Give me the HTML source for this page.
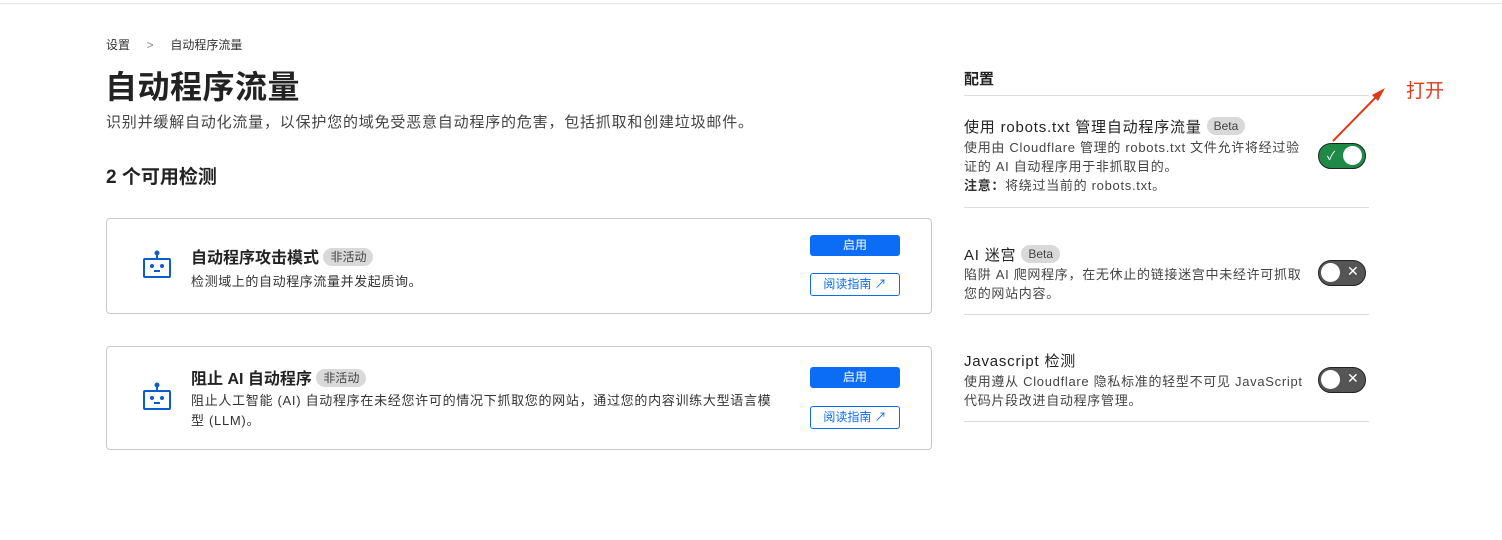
<!DOCTYPE html>
<html><head><meta charset="utf-8"><style>
*{box-sizing:border-box;margin:0;padding:0}
body{width:1502px;height:540px;background:#fff;font-family:"Liberation Sans","Noto Sans CJK SC",sans-serif;color:#313131;position:relative;overflow:hidden}
.topline{position:absolute;left:0;top:3px;width:1502px;height:1px;background:#e5e5e5}
.abs{position:absolute;white-space:nowrap}
.card{position:absolute;left:106px;width:826px;border:1px solid #c9c9c9;border-radius:4px}
.pill{display:inline-block;background:#d9d9d9;border-radius:10px;font-size:12px;padding:1px 7px;color:#444;vertical-align:2px;line-height:16px;font-weight:normal;letter-spacing:0}
.btn{position:absolute;left:703px;width:90px;height:21px;background:#0b6cf5;color:#fff;border-radius:3px;font-size:12px;text-align:center;line-height:21px}
.btn2{position:absolute;left:703px;width:90px;height:23px;border:1px solid #0b6cf5;color:#0b6cf5;border-radius:3px;font-size:12px;text-align:center;line-height:21px}
.hr{position:absolute;left:964px;width:405px;height:1px;background:#dcdcdc}
.tog{position:absolute;left:1318px;width:48px;height:26px;border-radius:13px;border:1.5px solid #222}
.knob{position:absolute;top:2px;width:19px;height:19px;border-radius:50%;background:#fff}
.t{font-size:15px;color:#222;letter-spacing:0.8px}
.d{font-size:13px;color:#444;line-height:19px;letter-spacing:0.7px}
</style></head><body>
<div class="topline"></div>
<div class="abs" style="left:106px;top:36px;font-size:12px;color:#333">设置 &nbsp;&nbsp;&nbsp;&nbsp;<span style="color:#888">&gt;</span>&nbsp;&nbsp;&nbsp;&nbsp; 自动程序流量</div>
<div class="abs" style="left:105px;top:62px;font-size:32px;font-weight:bold;color:#222;letter-spacing:0.5px">自动程序流量</div>
<div class="abs" style="left:106px;top:111px;font-size:15px;color:#444;letter-spacing:0.8px">识别并缓解自动化流量，以保护您的域免受恶意自动程序的危害，包括抓取和创建垃圾邮件。</div>
<div class="abs" style="left:106px;top:162px;font-size:19px;font-weight:bold;color:#222">2 个可用检测</div>

<div class="card" style="top:218px;height:96px">
 <svg class="abs" style="left:35px;top:31px" width="30" height="30" viewBox="0 0 30 30" fill="none" stroke="#0b5dcc" stroke-width="2"><circle cx="15" cy="3" r="1.5" fill="#0b5dcc"/><path d="M15 4.5V9"/><rect x="2" y="9" width="26" height="18" rx="1"/><circle cx="10" cy="16" r="1" fill="#0b5dcc"/><circle cx="20" cy="16" r="1" fill="#0b5dcc"/><path d="M12 21h6"/></svg>
 <div class="abs" style="left:84px;top:25px;font-size:16px;font-weight:bold;color:#222">自动程序攻击模式 <span class="pill">非活动</span></div>
 <div class="abs" style="left:84px;top:52px;font-size:13px;color:#333;letter-spacing:0.6px">检测域上的自动程序流量并发起质询。</div>
 <div class="btn" style="top:16px">启用</div>
 <div class="btn2" style="top:54px">阅读指南 ↗</div>
</div>

<div class="card" style="top:346px;height:104px">
 <svg class="abs" style="left:35px;top:35px" width="30" height="30" viewBox="0 0 30 30" fill="none" stroke="#0b5dcc" stroke-width="2"><circle cx="15" cy="3" r="1.5" fill="#0b5dcc"/><path d="M15 4.5V9"/><rect x="2" y="9" width="26" height="18" rx="1"/><circle cx="10" cy="16" r="1" fill="#0b5dcc"/><circle cx="20" cy="16" r="1" fill="#0b5dcc"/><path d="M12 21h6"/></svg>
 <div class="abs" style="left:84px;top:18px;font-size:16px;font-weight:bold;color:#222">阻止 AI 自动程序 <span class="pill">非活动</span></div>
 <div class="abs" style="left:84px;top:44px;font-size:13px;color:#333;line-height:20px;white-space:normal;width:592px;letter-spacing:0.7px">阻止人工智能 (AI) 自动程序在未经您许可的情况下抓取您的网站，通过您的内容训练大型语言模型 (LLM)。</div>
 <div class="btn" style="top:20px">启用</div>
 <div class="btn2" style="top:59px">阅读指南 ↗</div>
</div>

<div class="abs" style="left:964px;top:68px;font-size:15px;font-weight:bold;color:#222">配置</div>
<div class="hr" style="top:95px"></div>
<div class="abs t" style="left:964px;top:116px">使用 robots.txt 管理自动程序流量 <span class="pill">Beta</span></div>
<div class="abs d" style="left:964px;top:138px;white-space:normal;width:346px">使用由 Cloudflare 管理的 robots.txt 文件允许将经过验证的 AI 自动程序用于非抓取目的。<br><b style="color:#333">注意：</b>将绕过当前的 robots.txt。</div>
<div class="tog" style="top:143px;background:#1f8a47"><span class="abs" style="left:8px;top:3px;color:#fff;font-size:12px">✓</span><div class="knob" style="left:24px"></div></div>
<div class="hr" style="top:207px"></div>

<div class="abs t" style="left:964px;top:244px">AI 迷宫 <span class="pill">Beta</span></div>
<div class="abs d" style="left:964px;top:265px;white-space:normal;width:346px">陷阱 AI 爬网程序，在无休止的链接迷宫中未经许可抓取您的网站内容。</div>
<div class="tog" style="top:260px;background:#555"><div class="knob" style="left:2px"></div><span class="abs" style="left:28px;top:2px;color:#fff;font-size:14px">✕</span></div>
<div class="hr" style="top:314px"></div>

<div class="abs t" style="left:964px;top:350px">Javascript 检测</div>
<div class="abs d" style="left:964px;top:372px;white-space:normal;width:346px">使用遵从 Cloudflare 隐私标准的轻型不可见 JavaScript 代码片段改进自动程序管理。</div>
<div class="tog" style="top:367px;background:#555"><div class="knob" style="left:2px"></div><span class="abs" style="left:28px;top:2px;color:#fff;font-size:14px">✕</span></div>
<div class="hr" style="top:421px"></div>

<svg class="abs" style="left:1330px;top:85px" width="60" height="60" viewBox="0 0 60 60"><path d="M3 56L50 8" stroke="#e03a1a" stroke-width="2"/><path d="M55 3L42 10L48 16Z" fill="#e03a1a"/></svg>
<div class="abs" style="left:1406px;top:76px;font-size:19px;color:#e03a1a">打开</div>
</body></html>
